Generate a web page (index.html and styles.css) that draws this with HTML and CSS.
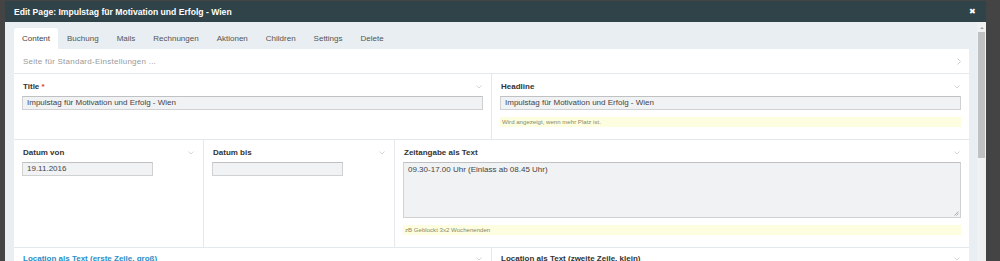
FILE: index.html
```html
<!DOCTYPE html>
<html>
<head>
<meta charset="utf-8">
<link rel="stylesheet" href="styles.css">
</head>
<body>
<div class="page">
  <div class="modal">
    <div class="modal-header">
      <span class="modal-title">Edit Page: Impulstag für Motivation und Erfolg - Wien</span>
      <span class="close">✖</span>
    </div>
    <div class="modal-body">
      <div class="content">
        <div class="tabs">
          <span class="tab active">Content</span>
          <span class="tab">Buchung</span>
          <span class="tab">Mails</span>
          <span class="tab">Rechnungen</span>
          <span class="tab">Aktionen</span>
          <span class="tab">Children</span>
          <span class="tab">Settings</span>
          <span class="tab">Delete</span>
        </div>
        <div class="panel">
          <div class="row row-collapsed">
            <span class="collapsed-text">Seite für Standard-Einstellungen ...</span>
            <svg class="chev-right" width="4" height="7" viewBox="0 0 4 7"><polyline points="0.5,0.5 3.5,3.5 0.5,6.5" fill="none" stroke="#c9ced1" stroke-width="1"/></svg>
          </div>
          <div class="row row-title">
            <div class="cell cell-half">
              <div class="label-line"><span class="label">Title <span class="req">*</span></span><svg class="chev" width="6" height="4" viewBox="0 0 6 4"><polyline points="0.5,0.5 3,3 5.5,0.5" fill="none" stroke="#d3d8db" stroke-width="1"/></svg></div>
              <div class="input">Impulstag für Motivation und Erfolg - Wien</div>
            </div>
            <div class="cell cell-half cell-last">
              <div class="label-line"><span class="label">Headline</span><svg class="chev" width="6" height="4" viewBox="0 0 6 4"><polyline points="0.5,0.5 3,3 5.5,0.5" fill="none" stroke="#d3d8db" stroke-width="1"/></svg></div>
              <div class="input">Impulstag für Motivation und Erfolg - Wien</div>
              <div class="hint">Wird angezeigt, wenn mehr Platz ist.</div>
            </div>
          </div>
          <div class="row row-dates">
            <div class="cell cell-date1">
              <div class="label-line"><span class="label">Datum von</span><svg class="chev" width="6" height="4" viewBox="0 0 6 4"><polyline points="0.5,0.5 3,3 5.5,0.5" fill="none" stroke="#d3d8db" stroke-width="1"/></svg></div>
              <div class="input input-short">19.11.2016</div>
            </div>
            <div class="cell cell-date2">
              <div class="label-line"><span class="label">Datum bis</span><svg class="chev" width="6" height="4" viewBox="0 0 6 4"><polyline points="0.5,0.5 3,3 5.5,0.5" fill="none" stroke="#d3d8db" stroke-width="1"/></svg></div>
              <div class="input input-short"></div>
            </div>
            <div class="cell cell-time cell-last">
              <div class="label-line"><span class="label">Zeitangabe als Text</span><svg class="chev" width="6" height="4" viewBox="0 0 6 4"><polyline points="0.5,0.5 3,3 5.5,0.5" fill="none" stroke="#d3d8db" stroke-width="1"/></svg></div>
              <div class="textarea">09.30-17.00 Uhr (Einlass ab 08.45 Uhr)
                <svg class="grip" width="5" height="5" viewBox="0 0 5 5"><path d="M4.5 0.5 L0.5 4.5 M4.5 2.5 L2.5 4.5" stroke="#999" stroke-width="0.8"/></svg>
              </div>
              <div class="hint">zB Geblockt 3x2 Wochenenden</div>
            </div>
          </div>
          <div class="row row-location">
            <div class="cell cell-half">
              <div class="label-line"><span class="label label-link">Location als Text (erste Zeile, groß)</span><svg class="chev" width="6" height="4" viewBox="0 0 6 4"><polyline points="0.5,0.5 3,3 5.5,0.5" fill="none" stroke="#d3d8db" stroke-width="1"/></svg></div>
            </div>
            <div class="cell cell-half cell-last">
              <div class="label-line"><span class="label">Location als Text (zweite Zeile, klein)</span><svg class="chev" width="6" height="4" viewBox="0 0 6 4"><polyline points="0.5,0.5 3,3 5.5,0.5" fill="none" stroke="#d3d8db" stroke-width="1"/></svg></div>
            </div>
          </div>
        </div>
      </div>
      <div class="scrollbar">
        <div class="scroll-up"></div>
        <div class="scroll-thumb"></div>
      </div>
    </div>
  </div>
</div>
</body>
</html>
```

FILE: styles.css
```css
html, body {
  margin: 0;
  padding: 0;
  height: 261px;
  overflow: hidden;
  background: #444444;
  font-family: "Liberation Sans", Arial, sans-serif;
  font-size: 8px;
  color: #333;
}

.page {
  padding: 1px 0 0 5px;
  display: flex;
}

.modal {
  width: 981px;
  display: flex;
  flex-direction: column;
}

.modal-header {
  height: 21px;
  background: #304349;
  color: #ffffff;
  display: flex;
  align-items: center;
  justify-content: space-between;
  padding: 0 10px 0 9px;
}

.modal-title {
  font-weight: bold;
  font-size: 8.6px;
}

.close {
  font-size: 8px;
  line-height: 1;
}

.modal-body {
  background: #e8eef1;
  display: flex;
  height: 239px;
}

.content {
  width: 955px;
  padding: 6px 0 0 9px;
}

.tabs {
  display: flex;
  height: 21px;
}

.tab {
  padding: 0 9px;
  display: flex;
  align-items: center;
  color: #555;
  font-size: 8px;
}

.tab.active {
  background: #ffffff;
  border-radius: 3px 3px 0 0;
  padding: 0 8px 0 8px;
  color: #444;
}

.panel {
  background: #ffffff;
}

.row {
  display: flex;
  border-bottom: 1px solid #e3e9ec;
}

.row-collapsed {
  height: 24px;
  align-items: center;
  justify-content: space-between;
  padding: 0 8px 0 9px;
}

.collapsed-text {
  color: #9a9a9a;
  letter-spacing: 0.25px;
}

.cell {
  border-right: 1px solid #e3e9ec;
  padding: 7px 8px 0 8px;
  box-sizing: border-box;
}

.cell-last {
  border-right: none;
}

.cell-half {
  width: 478px;
}

.cell-half.cell-last {
  width: 477px;
}

.row-title {
  height: 65px;
}

.row-dates {
  height: 107px;
}

.row-location {
  height: 14px;
  border-bottom: none;
}

.row-location .cell {
  padding-top: 5px;
}

.cell-date1 {
  width: 190px;
}

.cell-date2 {
  width: 191px;
}

.cell-time {
  width: 574px;
}

.label-line {
  display: flex;
  justify-content: space-between;
  align-items: center;
  height: 11px;
  padding-left: 1px;
}

.label {
  font-weight: bold;
  color: #333;
}

.label-link {
  color: #2a8ec6;
}

.req {
  color: #d33;
}

.chev {
  margin-right: 1px;
}

.input {
  margin-top: 4px;
  height: 14px;
  box-sizing: border-box;
  background: #f1f2f4;
  border: 1px solid #cfd1d3;
  border-top-color: #bfc1c3;
  padding: 0 4px;
  line-height: 12px;
  color: #444;
}

.input-short {
  width: 131px;
}

.textarea {
  position: relative;
  margin-top: 4px;
  height: 56px;
  box-sizing: border-box;
  background: #f1f2f4;
  border: 1px solid #cfd1d3;
  border-top-color: #bfc1c3;
  padding: 1px 4px;
  line-height: 12px;
  color: #444;
}

.grip {
  position: absolute;
  right: 1px;
  bottom: 1px;
}

.hint {
  margin-top: 7px;
  height: 10px;
  background: #fdfde0;
  color: #8a8a6a;
  font-size: 6.1px;
  line-height: 10px;
  padding-left: 2px;
}

.scrollbar {
  margin-left: 8px;
  width: 9px;
  background: #f1f1f1;
  display: flex;
  flex-direction: column;
  align-items: center;
}

.scroll-up {
  margin-top: 5px;
  width: 0;
  height: 0;
  border-left: 2px solid transparent;
  border-right: 2px solid transparent;
  border-bottom: 2px solid #a3a3a3;
}

.scroll-thumb {
  margin-top: 3px;
  width: 7px;
  height: 126px;
  background: #c1c1c1;
}
```
